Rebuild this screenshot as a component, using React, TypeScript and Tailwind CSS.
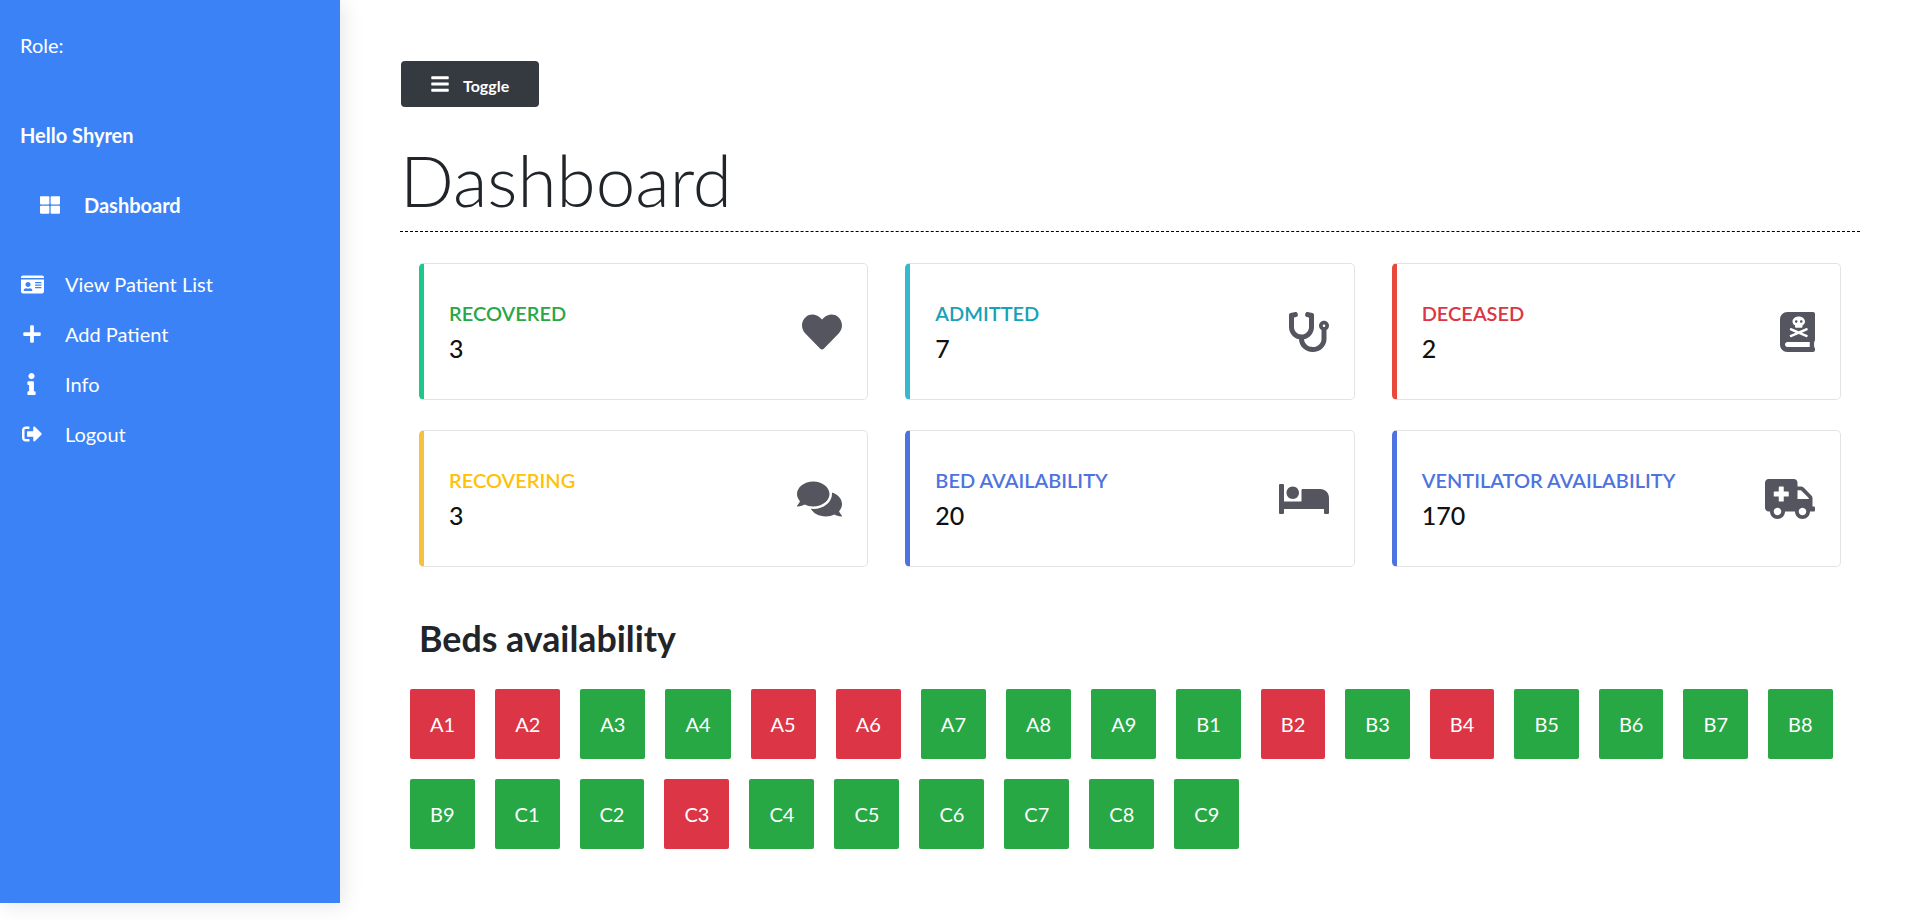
import type { IconType } from 'react-icons';
import {
  FaAmbulance,
  FaBars,
  FaBed,
  FaBookDead,
  FaComments,
  FaHeart,
  FaIdCard,
  FaInfo,
  FaPlus,
  FaSignOutAlt,
  FaStethoscope,
  FaThLarge,
} from 'react-icons/fa';

const navItems: { label: string; icon: IconType; iconClass: string }[] = [
  { label: 'View Patient List', icon: FaIdCard, iconClass: 'ml-[1px] h-[23px] w-[23px] shrink-0' },
  { label: 'Add Patient', icon: FaPlus, iconClass: 'h-[20px] w-[20px]' },
  { label: 'Info', icon: FaInfo, iconClass: 'h-[22px] w-[23px]' },
  { label: 'Logout', icon: FaSignOutAlt, iconClass: 'h-[20px] w-[20px]' },
];

const stats: { label: string; value: number; icon: IconType; iconWidth: string; border: string; text: string }[] = [
  { label: 'Recovered', value: 3, icon: FaHeart, iconWidth: 'w-[40px]', border: 'border-l-[#1cc88a]', text: 'text-[#28a745]' },
  { label: 'Admitted', value: 7, icon: FaStethoscope, iconWidth: 'w-[40px]', border: 'border-l-[#36b9cc]', text: 'text-[#17a2b8]' },
  { label: 'Deceased', value: 2, icon: FaBookDead, iconWidth: 'w-[35px]', border: 'border-l-[#e74a3b]', text: 'text-[#dc3545]' },
  { label: 'Recovering', value: 3, icon: FaComments, iconWidth: 'w-[45px]', border: 'border-l-[#f6c23e]', text: 'text-[#ffc107]' },
  { label: 'Bed Availability', value: 20, icon: FaBed, iconWidth: 'w-[50px]', border: 'border-l-[#4e73df]', text: 'text-[#4e73df]' },
  { label: 'Ventilator Availability', value: 170, icon: FaAmbulance, iconWidth: 'w-[50px]', border: 'border-l-[#4e73df]', text: 'text-[#4e73df]' },
];

const occupied = ['A1', 'A2', 'A5', 'A6', 'B2', 'B4', 'C3'];
const beds = ['A', 'B', 'C'].flatMap(row => [1, 2, 3, 4, 5, 6, 7, 8, 9].map(n => `${row}${n}`));

export default function App() {
  return (
    <div className="flex min-h-[920px] bg-white font-['Lato',sans-serif] text-[#212529]">
      {/* Sidebar */}
      <aside className="h-[903px] w-[340px] shrink-0 bg-[#3b82f6] pl-[20px] pt-[32px] text-[20px] text-white shadow-[3px_3px_20px_rgba(0,0,0,0.1)]">
        <div className="leading-[26px]">Role:</div>
        <div className="mt-[64px] font-bold leading-[26px]">Hello Shyren</div>
        <div className="mt-[44px] flex items-center pl-[20px] font-bold leading-[26px]">
          <FaThLarge className="h-[20px] w-[20px]" />
          <span className="ml-[24px]">Dashboard</span>
        </div>
        <nav className="mt-[41px] flex flex-col">
          {navItems.map(item => (
            <div key={item.label} className="flex h-[50px] items-center">
              <span className="flex w-[23px] justify-center">
                <item.icon className={item.iconClass} />
              </span>
              <span className="ml-[22px]">{item.label}</span>
            </div>
          ))}
        </nav>
      </aside>

      {/* Main content */}
      <main className="min-w-0 flex-1 px-[60px] pt-[61px]">
        <button className="ml-[1px] flex h-[46px] w-[138px] items-center rounded-[4px] bg-[#343a40] pl-[30px] text-[16px] font-bold text-white">
          <FaBars className="h-[20px] w-[18px]" />
          <span className="ml-[14px] mt-[3px]">Toggle</span>
        </button>

        <h1 className="mt-[30px] border-b border-dashed border-black pb-[8px] text-[71px] font-light leading-[86px]">
          Dashboard
        </h1>

        <div className="mt-[31px] grid grid-cols-3 gap-x-[37px] gap-y-[30px] px-[19px]">
          {stats.map(stat => (
            <div
              key={stat.label}
              className={`flex h-[137px] items-center justify-between rounded-[5px] border border-l-[5px] border-[#e3e3e3] pl-[25px] pr-[25px] ${stat.border}`}
            >
              <div>
                <div className={`text-[20px] font-semibold uppercase leading-[24px] ${stat.text}`}>{stat.label}</div>
                <div className="mt-[9px] text-[25px] font-medium leading-[29px] text-[#111111]">{stat.value}</div>
              </div>
              <stat.icon className={`h-[40px] text-[#54555e] ${stat.iconWidth}`} />
            </div>
          ))}
        </div>

        <h2 className="mt-[53px] pl-[19px] text-[35.75px] font-bold leading-[38px]">Beds availability</h2>

        <div className="mt-[31px] flex flex-wrap gap-x-[20px] gap-y-[20px] pl-[10px]">
          {beds.map(bed => (
            <div
              key={bed}
              className={`flex h-[70px] items-center rounded-[2px] px-[20px] text-[20px] text-white ${
                occupied.includes(bed) ? 'bg-[#dc3545]' : 'bg-[#28a745]'
              }`}
            >
              {bed}
            </div>
          ))}
        </div>
      </main>
    </div>
  );
}
